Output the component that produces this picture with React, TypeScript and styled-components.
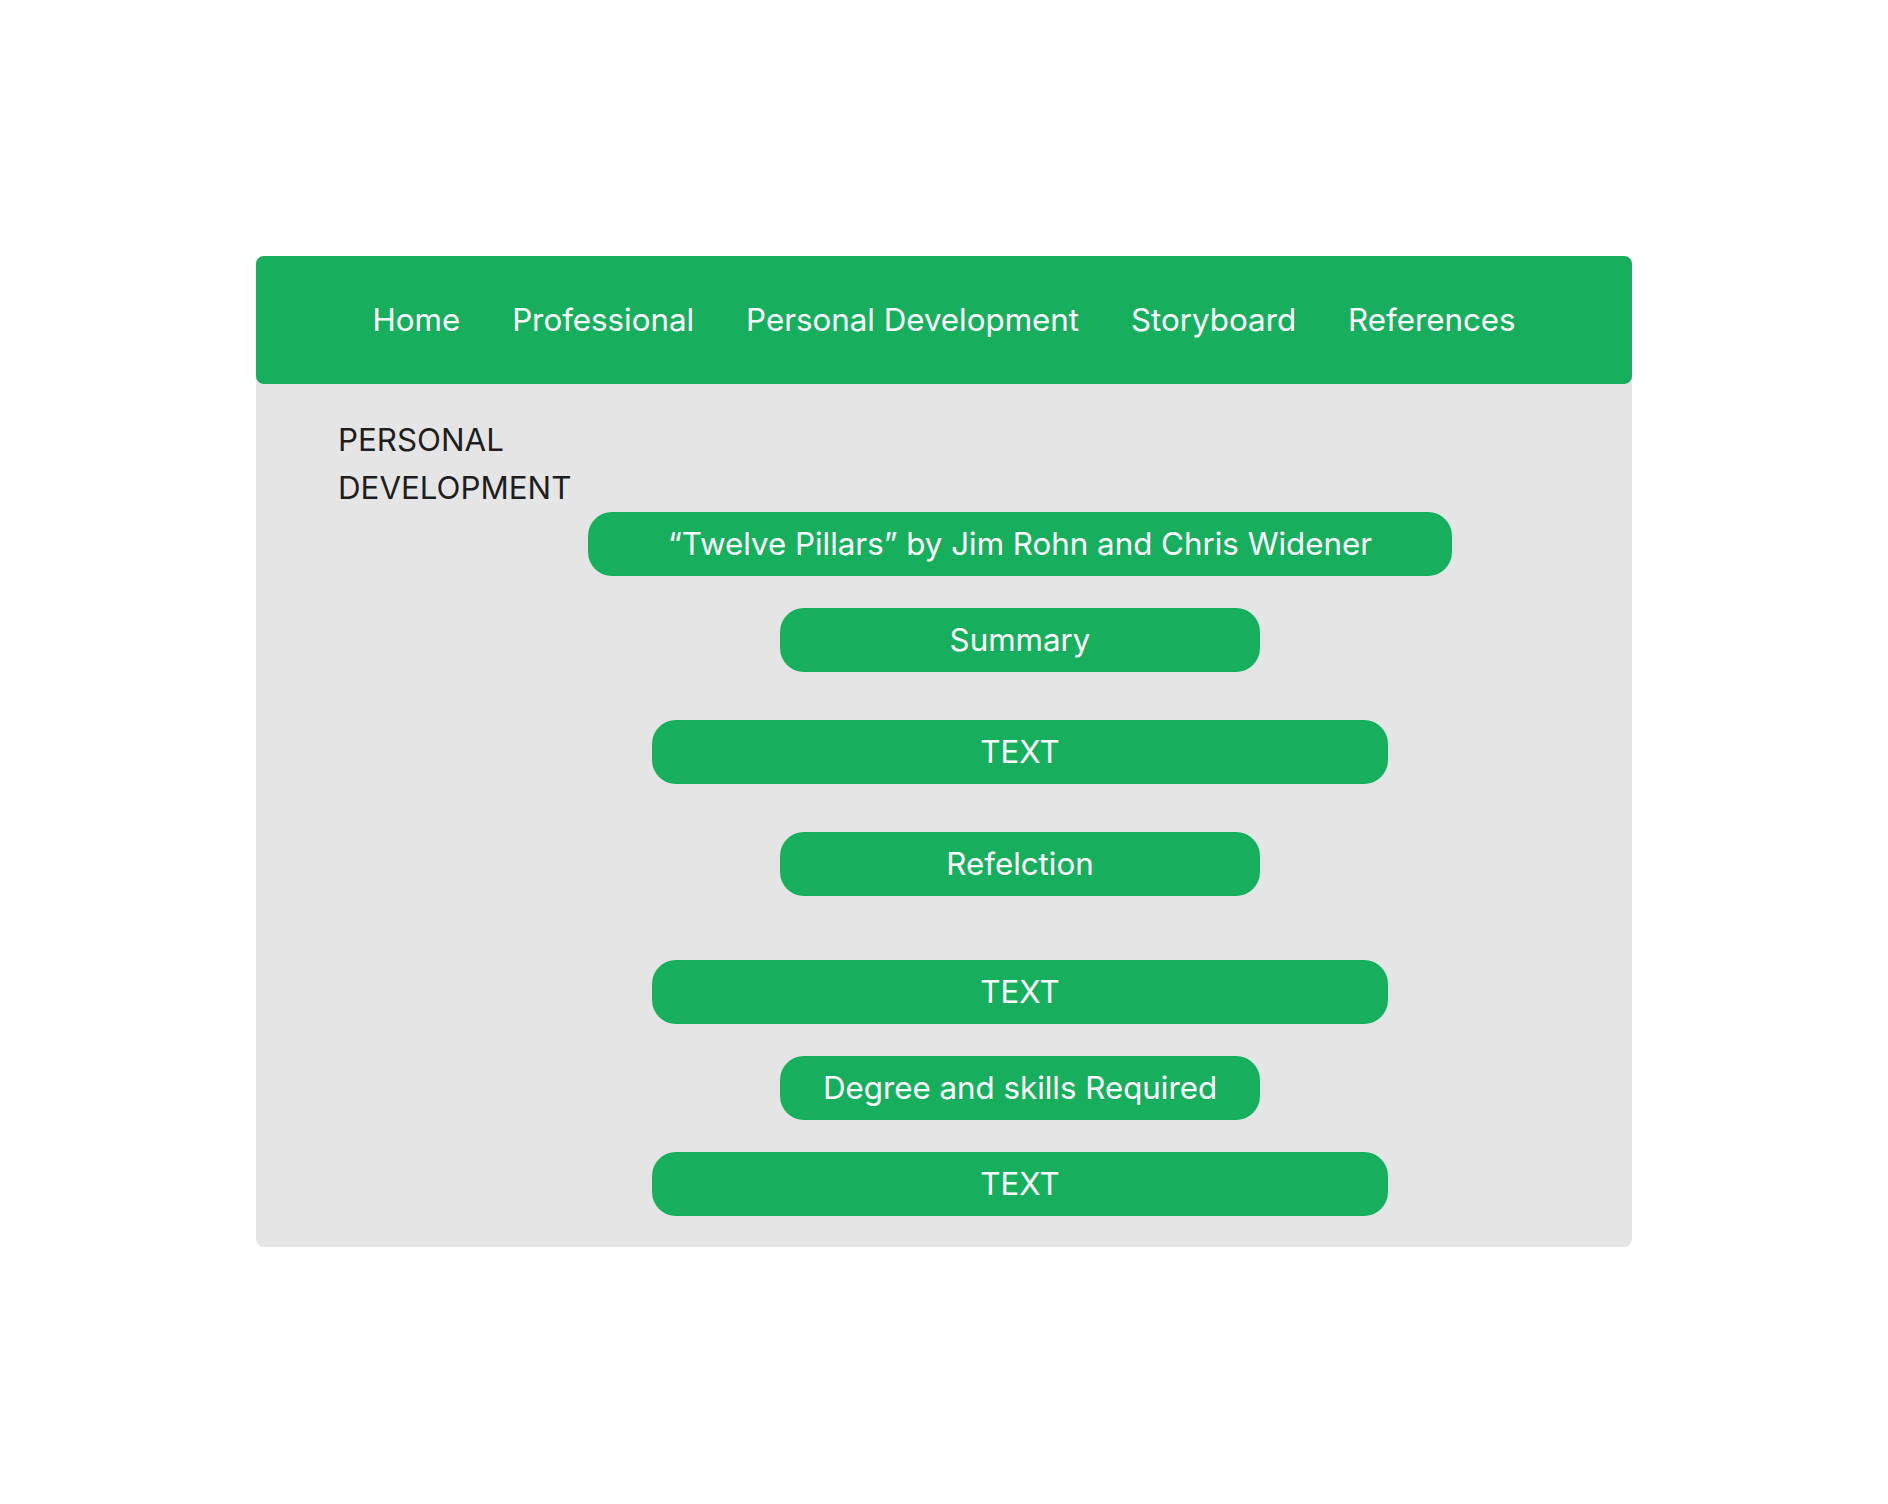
import React from "react";
import styled, { createGlobalStyle } from "styled-components";

const GREEN = "#17af5e";
const FONT_SIZE = "31.3px";

const GlobalStyle = createGlobalStyle`
  html, body {
    margin: 0;
    padding: 0;
    background: #ffffff;
    font-family: Inter, "Noto Sans", sans-serif;
  }
`;

const Page = styled.div`
  width: 1888px;
  min-height: 1504px;
  padding-top: 256px;
  box-sizing: border-box;
  display: flex;
  justify-content: center;
  align-items: flex-start;
`;

const Card = styled.div`
  width: 1376px;
  background: #e5e5e5;
  border-radius: 8px;
  display: flex;
  flex-direction: column;
`;

const Header = styled.nav`
  height: 128px;
  background: ${GREEN};
  border-radius: 8px;
  display: flex;
  align-items: center;
  justify-content: center;
  gap: 52px;
`;

const NavLink = styled.a`
  color: #ffffff;
  font-size: ${FONT_SIZE};
  line-height: 40px;
  text-decoration: none;
  white-space: nowrap;
`;

const Body = styled.div`
  padding: 32px 0 31px 82px;
  display: flex;
  flex-direction: column;
`;

const Heading = styled.h1`
  margin: 0;
  width: 260px;
  font-size: ${FONT_SIZE};
  line-height: 48px;
  font-weight: 400;
  color: #1e1e1e;
`;

const PillColumn = styled.div`
  margin-left: 70px;
  display: flex;
  flex-direction: column;
  align-items: center;
`;

const Pill = styled.div<{ $width: number; $gap: number }>`
  width: ${(p) => p.$width}px;
  height: 64px;
  margin-top: ${(p) => p.$gap}px;
  background: ${GREEN};
  border-radius: 24px;
  display: flex;
  align-items: center;
  justify-content: center;
  color: #ffffff;
  font-size: ${FONT_SIZE};
  white-space: nowrap;
`;

const navItems = ["Home", "Professional", "Personal Development", "Storyboard", "References"];

const pills = [
  { text: "\u201cTwelve Pillars\u201d by Jim Rohn and Chris Widener", width: 864, gap: 0 },
  { text: "Summary", width: 480, gap: 32 },
  { text: "TEXT", width: 736, gap: 48 },
  { text: "Refelction", width: 480, gap: 48 },
  { text: "TEXT", width: 736, gap: 64 },
  { text: "Degree and skills Required", width: 480, gap: 32 },
  { text: "TEXT", width: 736, gap: 32 },
];

export default function App() {
  return (
    <>
      <GlobalStyle />
      <Page>
        <Card>
          <Header>
            {navItems.map((n) => (
              <NavLink key={n} href="#">
                {n}
              </NavLink>
            ))}
          </Header>
          <Body>
            <Heading>PERSONAL DEVELOPMENT</Heading>
            <PillColumn>
              {pills.map((p, i) => (
                <Pill key={i} $width={p.width} $gap={p.gap}>
                  {p.text}
                </Pill>
              ))}
            </PillColumn>
          </Body>
        </Card>
      </Page>
    </>
  );
}
